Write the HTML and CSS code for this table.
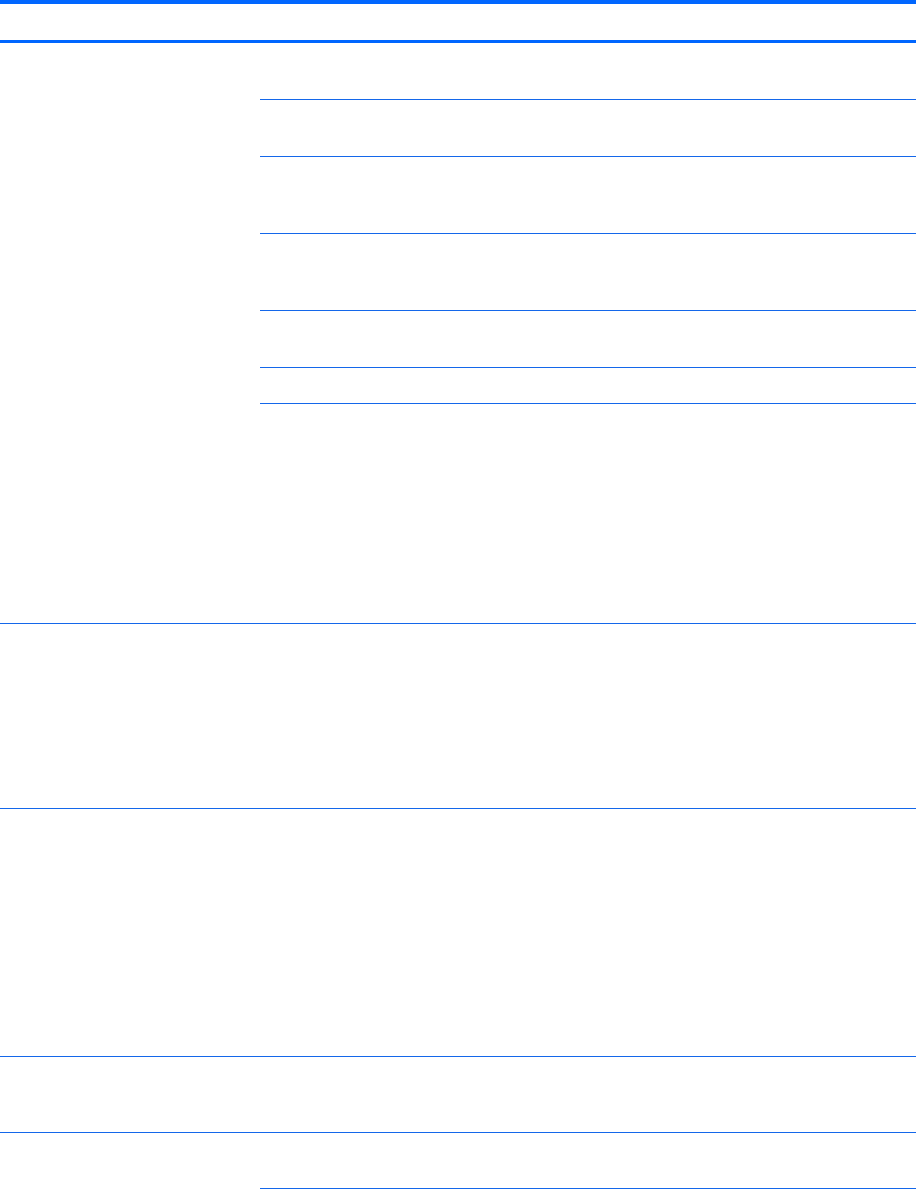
FILE: index.html
```html
<!DOCTYPE html>
<html lang="en">
<head>
  <meta charset="UTF-8">
  <meta name="viewport" content="width=device-width, initial-scale=1.0">
  <title>Table</title>
  <link rel="stylesheet" href="styles.css">
</head>
<body>
  <div class="table">
    <!-- header row -->
    <div class="head"></div>

    <div class="group">
      <div class="label"></div>
      <div class="rows">
        <div class="row h56"></div>
        <div class="row h56"></div>
        <div class="row h76"></div>
        <div class="row h76"></div>
        <div class="row h56"></div>
        <div class="row h35"></div>
        <div class="row h219"></div>
      </div>
    </div>

    <div class="group">
      <div class="label"></div>
      <div class="rows">
        <div class="row h184"></div>
      </div>
    </div>

    <div class="group">
      <div class="label"></div>
      <div class="rows">
        <div class="row h247"></div>
      </div>
    </div>

    <div class="group">
      <div class="label"></div>
      <div class="rows">
        <div class="row h75"></div>
      </div>
    </div>

    <div class="group open">
      <div class="label"></div>
      <div class="rows">
        <div class="row h55"></div>
        <div class="row h60"></div>
      </div>
    </div>
  </div>
</body>
</html>
```

FILE: styles.css
```css
body {
  margin: 0;
  background: #fff;
  font-family: "Liberation Sans", Arial, sans-serif;
}

.table {
  width: 916px;
}

.head {
  height: 36px;
  border-top: 4px solid #0066ff;
  border-bottom: 3px solid #0066ff;
}

.group {
  display: flex;
  border-bottom: 1px solid #1467ea;
}
.group.open {
  border-bottom: none;
}

.label {
  width: 260px;
  flex-shrink: 0;
}

.rows {
  flex: 1;
  display: flex;
  flex-direction: column;
}

.row {
  border-bottom: 1px solid #1467ea;
}
.rows .row:last-child {
  border-bottom: none;
}

.h35 { height: 35px; }
.h55 { height: 55px; }
.h56 { height: 56px; }
.h60 { height: 60px; }
.h75 { height: 75px; }
.h76 { height: 76px; }
.h184 { height: 184px; }
.h219 { height: 219px; }
.h247 { height: 247px; }
```
